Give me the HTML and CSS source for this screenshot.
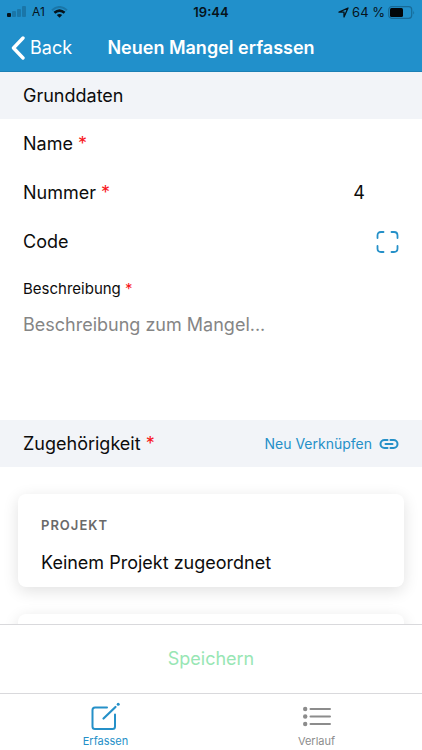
FILE: index.html
```html
<!DOCTYPE html>
<html lang="de">
<head>
<meta charset="utf-8">
<meta name="viewport" content="width=device-width, initial-scale=1">
<title>Neuen Mangel erfassen</title>
<link rel="stylesheet" href="styles.css">
</head>
<body>
<header class="top">
  <div class="status">
    <div class="status-left">
      <svg width="19" height="12" viewBox="0 0 19 12" aria-hidden="true">
        <rect x="0" y="7" width="4" height="4" rx="1" fill="#06131b"/>
        <g fill="#1a76a8"><rect x="5" y="5" width="4" height="6" rx="1"/><rect x="10" y="3" width="4" height="8" rx="1"/><rect x="15" y="0" width="4" height="11" rx="1"/></g>
      </svg>
      <span>A1</span>
      <svg width="17" height="12" viewBox="0 0 17 12" fill="none" aria-hidden="true">
        <path d="M1 4.200Q8.500-2.200 16 4.200" stroke="#1a76a8" stroke-width="2"/>
        <path d="M3.400 6.800Q8.500 2.400 13.600 6.800" stroke="#06131b" stroke-width="2.600"/>
        <path d="M5.800 9Q8.500 6.800 11.200 9L8.500 11.800Z" fill="#06131b"/>
      </svg>
    </div>
    <time class="clock">19:44</time>
    <div class="status-right">
      <svg width="11" height="11" viewBox="0 0 11 11" aria-hidden="true"><path d="M1 5.200L10 1L6 10V5.200Z" fill="none" stroke="#06131b" stroke-width="1.300" stroke-linejoin="round"/></svg>
      <span>64 %</span>
      <svg width="27" height="13" viewBox="0 0 27 13" aria-hidden="true">
        <rect x=".7" y=".7" width="23" height="11.600" rx="3" fill="none" stroke="#176a97" stroke-width="1.200"/>
        <rect x="2" y="2" width="13" height="9" rx="1.500" fill="#020609"/>
        <path d="M25.300 4.500Q26.800 6.500 25.300 8.500Z" fill="#176a97"/>
      </svg>
    </div>
  </div>
  <nav class="navbar">
    <a class="back" href="#">
      <svg width="14" height="24" viewBox="0 0 14 24" aria-hidden="true"><path d="M12 2L2.500 12L12 22" fill="none" stroke="#fff" stroke-width="3.400" stroke-linecap="round" stroke-linejoin="round"/></svg>
      Back
    </a>
    <h1 class="title">Neuen Mangel erfassen</h1>
  </nav>
</header>

<main class="content">
  <form id="defect">
    <h2 class="section">Grunddaten</h2>
    <div class="row">
      <label for="name">Name <span class="req">*</span></label>
      <input class="field" id="name" type="text">
    </div>
    <div class="row">
      <label for="number">Nummer <span class="req">*</span></label>
      <input class="field number" id="number" type="text" value="4">
    </div>
    <div class="row">
      <label for="code">Code</label>
      <input class="field" id="code" type="text">
      <button class="scan" type="button" aria-label="Code scannen">
        <svg width="24" height="24" viewBox="0 0 24 24" fill="none" stroke="#2590c8" stroke-width="1.800" stroke-linecap="round" aria-hidden="true"><path d="M2.500 8V5.500Q2.500 2 6 2H8.500M16.500 2H19Q22.500 2 22.500 5.500V8M22.500 16V18.500Q22.500 22 19 22H16.500M8.500 22H6Q2.500 22 2.500 18.500V16"/></svg>
      </button>
    </div>
    <div class="description">
      <label class="small" for="desc">Beschreibung <span class="req">*</span></label>
      <textarea class="area" id="desc" placeholder="Beschreibung zum Mangel..."></textarea>
    </div>
    <div class="section">
      <h2 class="heading">Zugehörigkeit <span class="req">*</span></h2>
      <button class="link" type="button">Neu Verknüpfen
        <svg width="20" height="12" viewBox="0 0 20 12" fill="none" stroke="#2590c8" stroke-width="2" stroke-linecap="round" aria-hidden="true"><path d="M8.500 2H5.500A4 4 0 0 0 5.500 10H8.500M11.500 2H14.500A4 4 0 0 1 14.500 10H11.500M6.500 6H13.500"/></svg>
      </button>
    </div>
    <div class="cards">
      <section class="card">
        <h3 class="card-title">PROJEKT</h3>
        <p class="card-text">Keinem Projekt zugeordnet</p>
      </section>
      <section class="card"></section>
    </div>
  </form>
</main>

<footer class="bottom">
  <button class="save" type="submit" form="defect">Speichern</button>
  <nav class="tabs">
    <a class="tab active" href="#">
      <svg width="30" height="30" viewBox="0 0 30 30" fill="none" stroke="currentColor" stroke-width="2" stroke-linecap="round" stroke-linejoin="round" aria-hidden="true"><path d="M16 5.500H4Q1.500 5.500 1.500 8V24.500Q1.500 27 4 27H21.500Q24 27 24 24.500V12.500"/><path d="M12.500 16.500L24.500 5" stroke-width="2.200"/><circle cx="27.200" cy="2.300" r="1.500" fill="currentColor" stroke="none"/></svg>
      Erfassen
    </a>
    <a class="tab" href="#">
      <svg width="30" height="30" viewBox="0 0 30 30" fill="none" stroke="currentColor" stroke-width="2" stroke-linecap="round" aria-hidden="true"><path d="M8.500 7H28M8.500 14.500H28M8.500 22H28"/><g fill="currentColor" stroke="none"><circle cx="3.200" cy="7" r="2.200"/><circle cx="3.200" cy="14.500" r="2.200"/><circle cx="3.200" cy="22" r="2.200"/></g></svg>
      Verlauf
    </a>
  </nav>
</footer>
</body>
</html>
```
FILE: styles.css
```css
* { box-sizing: border-box; }

body {
  margin: 0;
  height: 100vh;
  display: flex;
  flex-direction: column;
  font-family: Inter, "Liberation Sans", sans-serif;
  font-size: 18px;
  line-height: 24px;
  color: #0c0c0c;
  background: #fff;
}

h1, h2, h3, p { margin: 0; font-size: inherit; font-weight: 400; }
a { text-decoration: none; }
button, input, textarea {
  margin: 0;
  padding: 0;
  border: 0;
  outline: 0;
  background: none;
  font: inherit;
  color: inherit;
}
svg { display: block; flex: none; }

.top { background: #2190cb; border-bottom: 1px solid #1c80b5; }

.status {
  display: grid;
  grid-template-columns: 1fr auto 1fr;
  align-items: center;
  height: 24px;
  padding: 0 7px;
  font-size: 13px;
  color: #06131b;
}
.status-left, .status-right { display: flex; align-items: center; }
.status-left { gap: 6px; font-size: 12px; }
.status-right { justify-content: flex-end; gap: 3px; }
.clock { font-weight: 600; }

.navbar {
  display: grid;
  grid-template-columns: 1fr auto 1fr;
  align-items: center;
  height: 47px;
  padding: 0 11px;
  color: #fff;
}
.back { display: flex; align-items: center; gap: 5px; color: #fff; }
.title { font-weight: 600; }

.content { flex: 1; min-height: 0; overflow: hidden; }

.section {
  display: flex;
  align-items: center;
  justify-content: space-between;
  height: 47px;
  padding: 0 23px;
  background: #f2f4f8;
}
.req { color: #f8161c; }

.row {
  display: flex;
  align-items: center;
  gap: 12px;
  height: 49px;
  padding: 0 23px;
}
.field { flex: 1; min-width: 0; }
.number { padding-right: 34px; text-align: right; }
.scan, .link { cursor: pointer; }

.description { display: flex; flex-direction: column; gap: 12px; padding: 11px 23px 0; }
.small { font-size: 15px; }
.area { height: 107px; resize: none; }
.area::placeholder { color: #858585; opacity: 1; }

.link { display: flex; align-items: center; gap: 7px; font-size: 14px; color: #2590c8; }

.cards { display: flex; flex-direction: column; gap: 27px; padding: 27px 18px; }
.card {
  min-height: 93px;
  padding: 19px 23px 12px;
  border-radius: 8px;
  background: #fff;
  box-shadow: 0 4px 16px rgba(0, 0, 0, 0.12);
}
.card-title { font-size: 13px; font-weight: 600; letter-spacing: 1px; color: #696969; }
.card-text { padding-top: 14px; }

.bottom { background: #fff; }
.save {
  display: block;
  width: 100%;
  height: 69px;
  border-top: 1px solid #d9d9dc;
  color: #98e6b4;
}
.tabs {
  display: grid;
  grid-template-columns: 1fr 1fr;
  height: 57px;
  border-top: 1px solid #d9d9dc;
}
.tab {
  display: flex;
  flex-direction: column;
  align-items: center;
  padding-top: 8px;
  font-size: 11px;
  line-height: 18px;
  color: #8c8c8c;
}
.active { color: #2590c8; }
```
